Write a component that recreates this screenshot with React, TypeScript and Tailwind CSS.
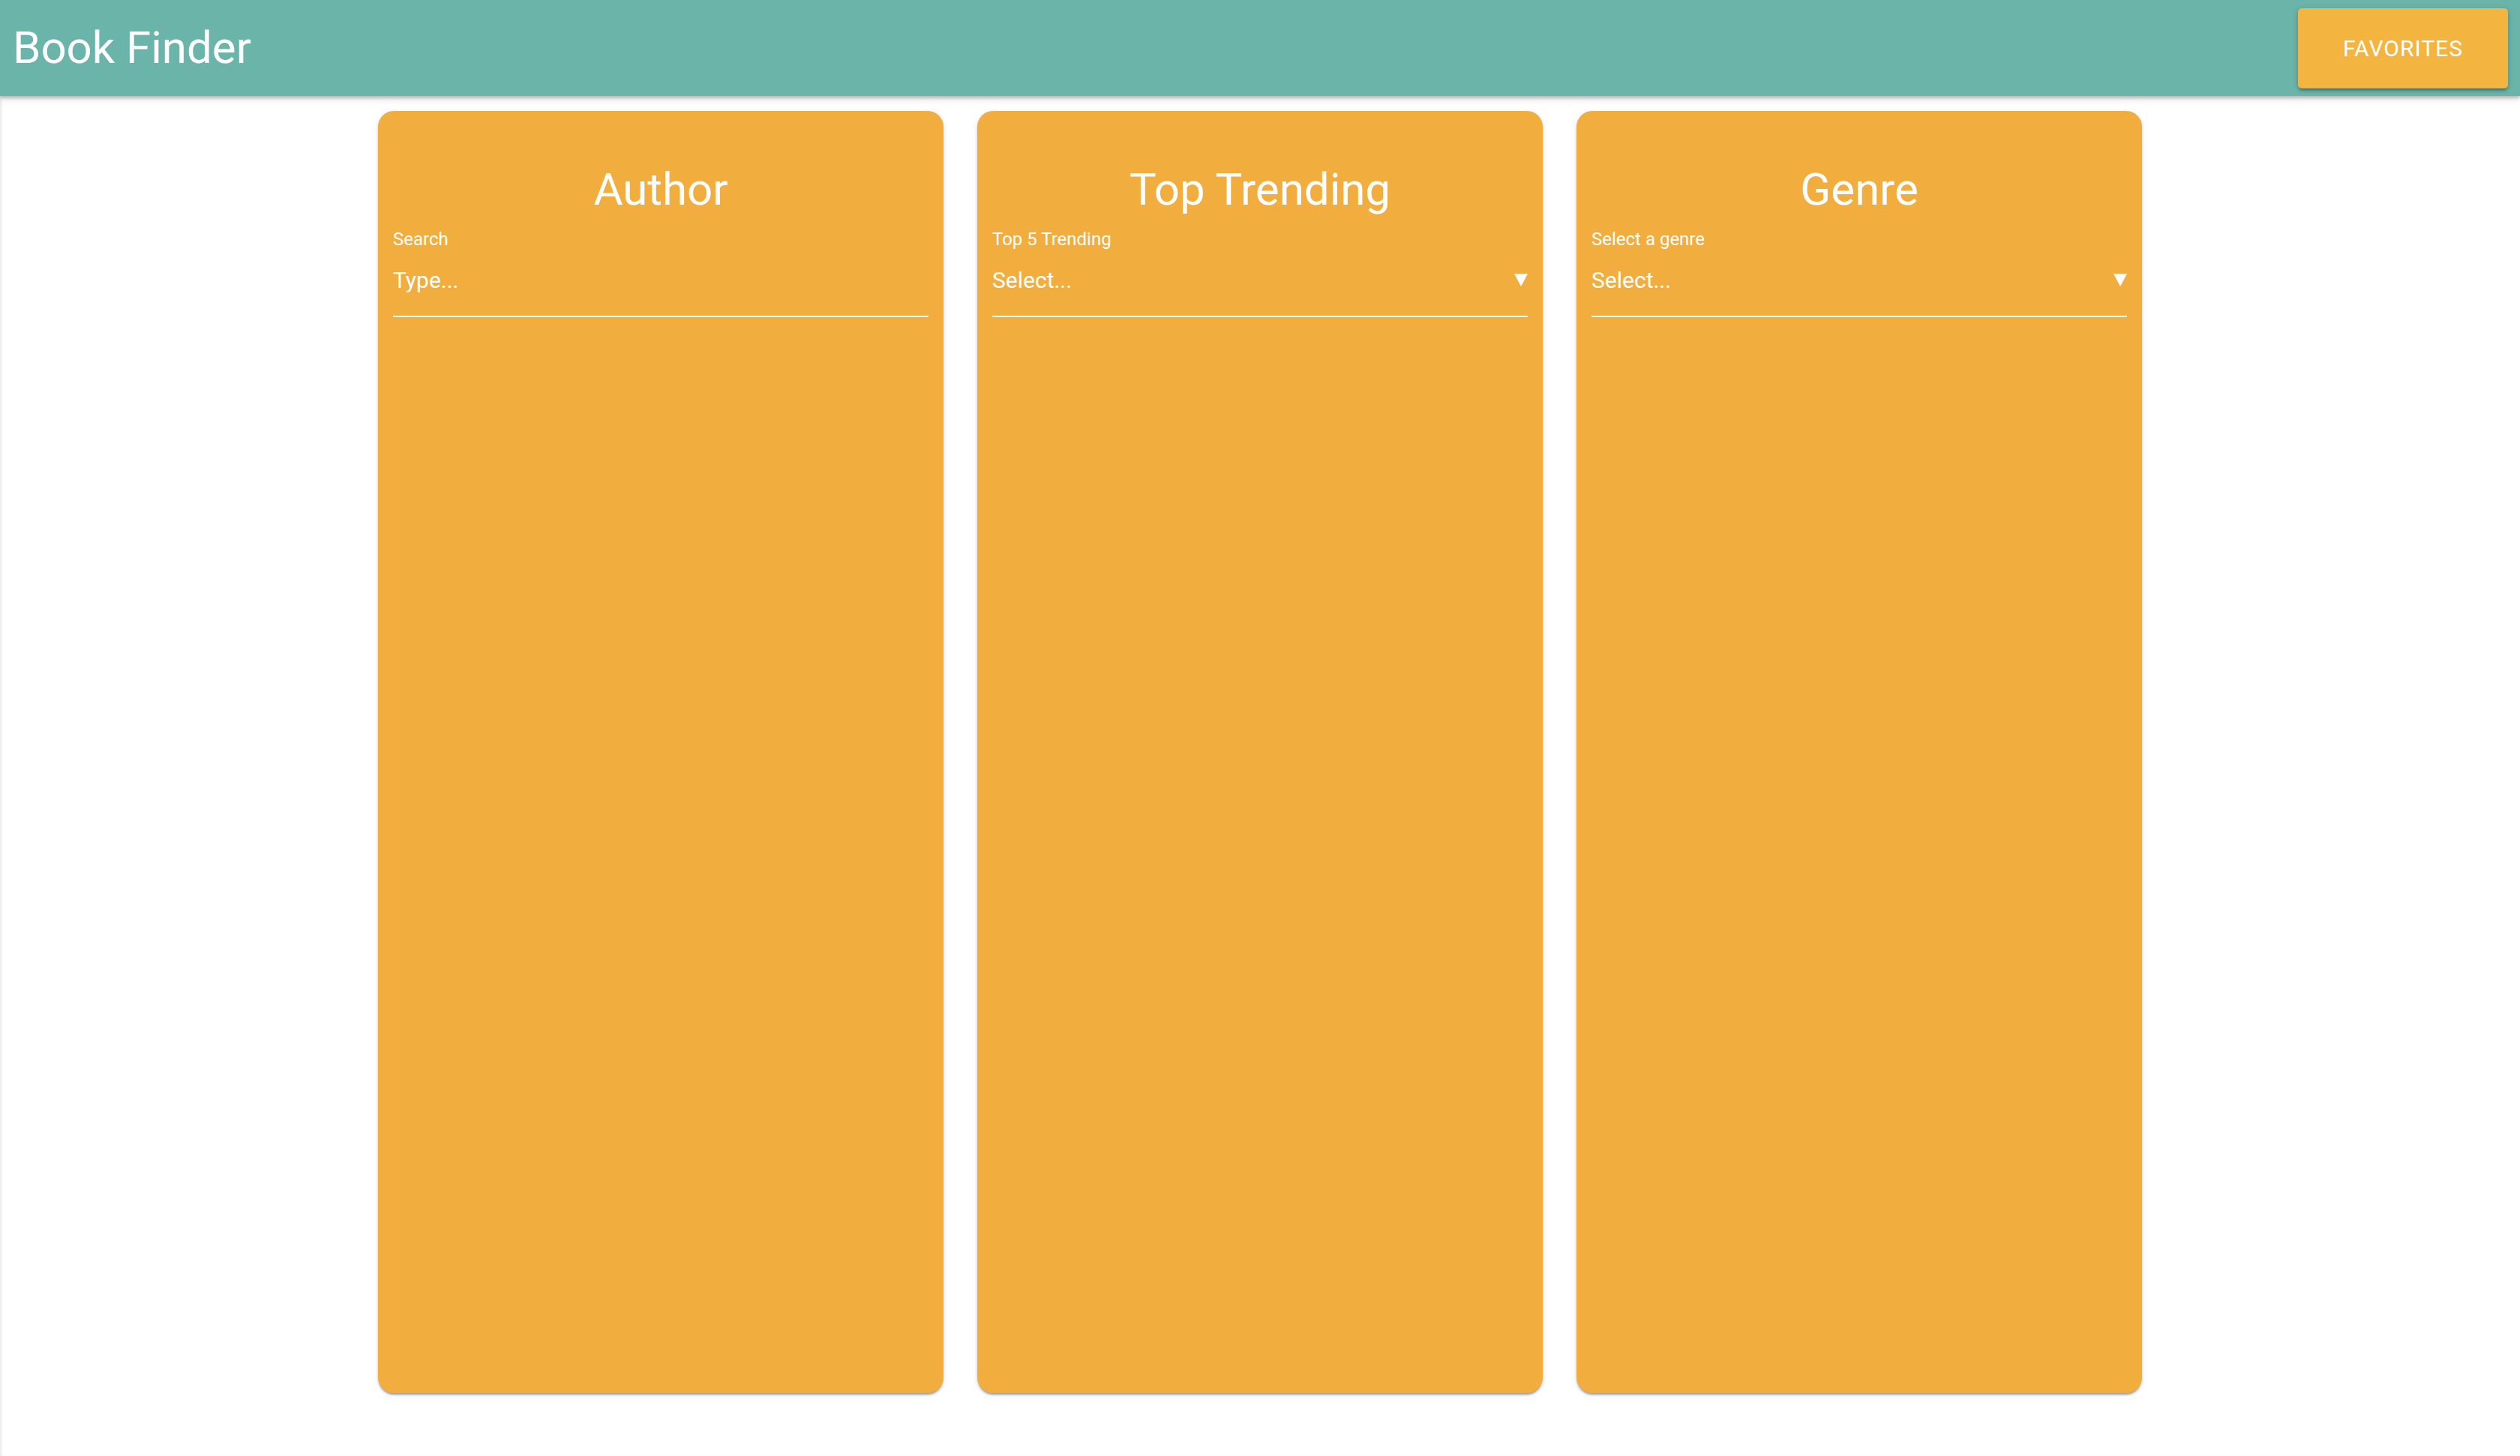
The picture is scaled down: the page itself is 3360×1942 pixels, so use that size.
import React from "react";

const PANELS = [
  { title: "Author", label: "Search", placeholder: "Type...", select: false },
  { title: "Top Trending", label: "Top 5 Trending", placeholder: "Select...", select: true },
  { title: "Genre", label: "Select a genre", placeholder: "Select...", select: true },
];

function Caret() {
  return (
    <svg width="18" height="17" viewBox="0 0 18 17" className="shrink-0 mb-[7px]">
      <polygon points="0,0 18,0 9,17" fill="#ffffff" />
    </svg>
  );
}

export default function App() {
  return (
    <div className="h-[1942px] overflow-hidden bg-white font-['Roboto','Liberation_Sans',sans-serif] text-white">
      {/* Top bar */}
      <header className="relative z-10 h-[128px] bg-[#6bb4aa] flex items-center justify-between pl-[17px] pr-[16px] shadow-[0_3px_4px_rgba(0,0,0,0.22),0_6px_10px_rgba(0,0,0,0.08)]">
        <h1 className="text-[60px] leading-none font-normal">Book Finder</h1>
        <button className="w-[280px] h-[107px] rounded-[5px] bg-[#f4b540] text-[30px] font-normal uppercase tracking-[1px] shadow-[0_4px_3px_-2px_rgba(0,0,0,0.25),0_3px_5px_rgba(0,0,0,0.14),0_1px_8px_rgba(0,0,0,0.12)]">
          Favorites
        </button>
      </header>

      {/* Panels */}
      <main className="h-[1814px] pt-[20px] shadow-[inset_3px_0_4px_-2px_rgba(0,0,0,0.12)]">
        <div className="flex justify-center gap-[45px]">
          {PANELS.map((p) => (
            <section
              key={p.title}
              className="w-[754px] h-[1710px] rounded-[21px] bg-[#f1ae3f] px-[20px] shadow-[0_4px_3px_-2px_rgba(0,0,0,0.25),0_2px_3px_rgba(0,0,0,0.14),0_2px_6px_rgba(0,0,0,0.1)]"
            >
              <h2 className="mt-[69px] text-center text-[60px] leading-[72px] font-normal">{p.title}</h2>
              <div className="mt-[18px] text-[24px] leading-[24px]">{p.label}</div>
              <div className="mt-[28px] flex items-end justify-between border-b-2 border-white pb-[32px]">
                <span className="text-[30px] leading-[30px]">{p.placeholder}</span>
                {p.select && <Caret />}
              </div>
            </section>
          ))}
        </div>
      </main>
    </div>
  );
}
